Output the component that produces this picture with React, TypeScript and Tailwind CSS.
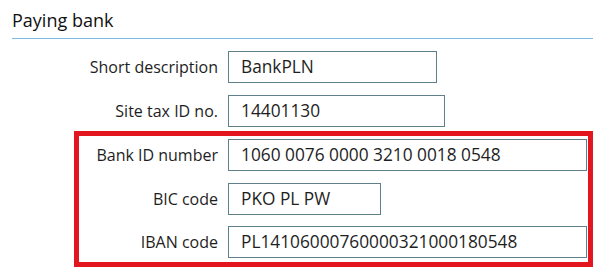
const rows = [
  { label: "Short description", value: "BankPLN", width: "w-[209px]" },
  { label: "Site tax ID no.", value: "14401130", width: "w-[217px]" },
];

const bankRows = [
  { label: "Bank ID number", value: "1060 0076 0000 3210 0018 0548", width: "flex-1" },
  { label: "BIC code", value: "PKO PL PW", width: "w-[153px]" },
  { label: "IBAN code", value: "PL14106000760000321000180548", width: "flex-1" },
];

const Field = ({ label, value, width, labelWidth }: { label: string; value: string; width: string; labelWidth: string }) => (
  <div className="flex items-center gap-[10px]">
    <div className={`${labelWidth} shrink-0 text-right text-[16px] font-medium text-[#1e1e1e]`}>{label}</div>
    <div className={`${width} h-[32px] border border-[#5f808b] bg-white pl-[12px] flex items-center text-[17.3px] text-[#1e1e1e]`}>
      {value}
    </div>
  </div>
);

export default function App() {
  return (
    <div className="w-[593px] h-[268px] bg-white overflow-hidden" style={{ fontFamily: '"Open Sans", sans-serif' }}>
      <div className="ml-[12px] pt-[8px] h-[39px] border-b border-[#7cb9e6]">
        <h3 className="text-[18px] leading-[24px] font-medium text-[#111]">Paying bank</h3>
      </div>
      <div className="mt-[12px] flex flex-col gap-[12px]">
        {rows.map((r) => (
          <Field key={r.label} {...r} labelWidth="w-[218px]" />
        ))}
      </div>
      <div className="ml-[74px] mt-[4px] border-[5px] border-[#e3151f] pt-[3px] pb-[4px] pr-[1px] flex flex-col gap-[11.5px]">
        {bankRows.map((r) => (
          <Field key={r.label} {...r} labelWidth="w-[139px]" />
        ))}
      </div>
    </div>
  );
}
